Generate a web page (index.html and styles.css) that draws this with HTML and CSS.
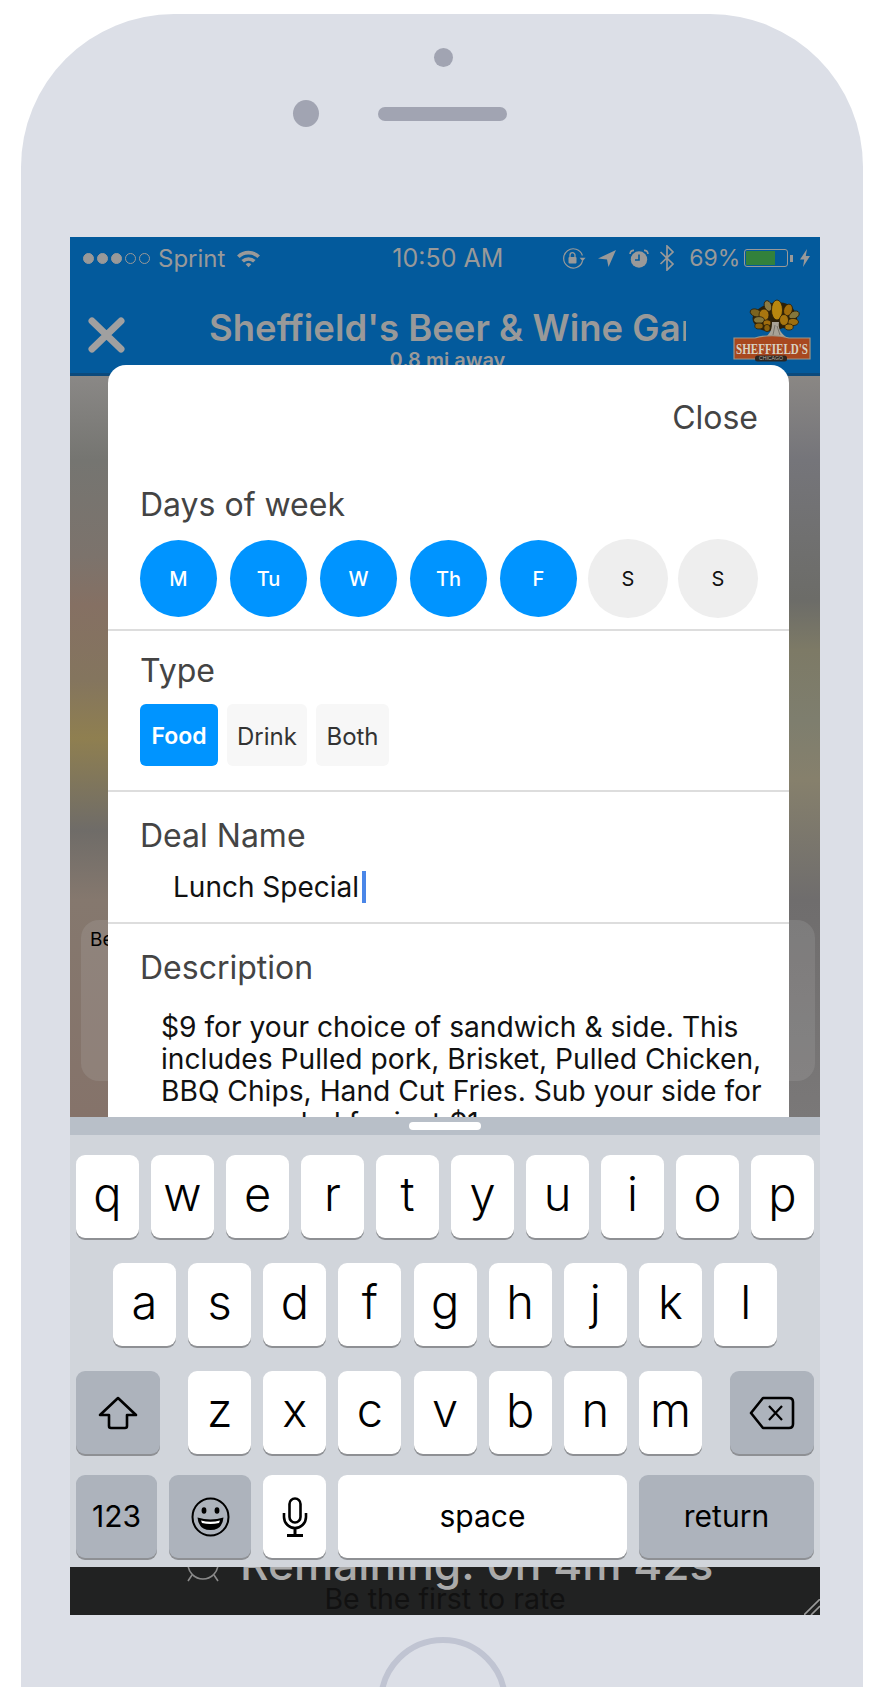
FILE: index.html
```html
<!DOCTYPE html>
<html>
<head>
<title>Add Deal</title>
<link rel="stylesheet" href="styles.css">
</head>
<body>

<div class="phone">
  <div class="phone-top">
    <div class="sensor"></div>
    <div class="sensor-row">
      <div class="camera"></div>
      <div class="speaker"></div>
    </div>
  </div>

  <div class="screen">
    <div class="header">
      <div class="status">
        <div class="signal">
          <i class="on"></i><i class="on"></i><i class="on"></i><i></i><i></i>
        </div>
        <span class="carrier">Sprint</span>
        <svg class="wifi" viewBox="0 0 24 18" width="25" height="19">
          <path d="M1 6 A16 16 0 0 1 23 6 L20.5 8.6 A12.5 12.5 0 0 0 3.5 8.6 Z" fill="#999"/>
          <path d="M5.2 10.4 A10 10 0 0 1 18.8 10.4 L16.4 12.8 A6.6 6.6 0 0 0 7.6 12.8 Z" fill="#999"/>
          <path d="M9.3 14.5 A4.2 4.2 0 0 1 14.7 14.5 L12 17.5 Z" fill="#999"/>
        </svg>
        <span class="clock">10:50 AM</span>
        <svg class="ico-lock" viewBox="0 0 24 21" width="24" height="21">
          <path d="M20.5 13 A9.6 9.6 0 1 1 20.4 7.5" fill="none" stroke="#999" stroke-width="1.2"/>
          <path d="M17.6 9.8 H23.6 L20.6 13.2 Z" fill="#999"/>
          <rect x="6.5" y="9" width="8" height="6.5" rx="1" fill="#999"/>
          <path d="M8 9 V7.2 A2.5 2.5 0 0 1 13 7.2 V9" fill="none" stroke="#999" stroke-width="1.3"/>
        </svg>
        <svg class="ico-loc" viewBox="0 0 18 17" width="18" height="17">
          <path d="M0 8.5 L18 0 L10.5 17 L9 9.5 Z" fill="#999"/>
        </svg>
        <svg class="ico-alarm" viewBox="0 0 20 19" width="20" height="19">
          <circle cx="10" cy="10.5" r="8.2" fill="#999"/>
          <path d="M10 5.5 V11 H6" fill="none" stroke="#035a9c" stroke-width="1.6"/>
          <path d="M1 5 A4 4 0 0 1 5 1.4 M19 5 A4 4 0 0 0 15 1.4" fill="none" stroke="#999" stroke-width="1.6"/>
        </svg>
        <svg class="ico-bt" viewBox="0 0 16 26" width="16" height="26">
          <path d="M1.5 7 L14 19 L8 25 V1 L14 7 L1.5 19" fill="none" stroke="#999" stroke-width="1.7"/>
        </svg>
        <span class="percent">69%</span>
        <div class="battery"><div class="battery-level"></div></div>
        <div class="battery-nub"></div>
        <svg class="ico-bolt" viewBox="0 0 10 18" width="10" height="18">
          <path d="M7 0 L0 10.5 H4.2 L3 18 L10 7 H5.8 Z" fill="#999"/>
        </svg>
      </div>

      <div class="nav">
        <svg class="nav-close" viewBox="0 0 37 36" width="37" height="36">
          <path d="M4 4 L33 32 M33 4 L4 32" stroke="#a0a0a0" stroke-width="7" stroke-linecap="round"/>
        </svg>
        <div class="nav-title">
          <div class="venue">Sheffield's Beer &amp; Wine Garden</div>
          <div class="distance">0.8 mi away</div>
        </div>
        <svg class="logo" viewBox="0 0 78 63" width="78" height="63">
          <path d="M22 14 C30 2 56 -2 62 13 C68 22 60 31 50 29 C42 33 28 34 24 27 C19 24 18 18 22 14 Z" fill="#2c2008"/>
          <path d="M33 38 C38 33 39 30 39 23 L46 23 C45 29 47 33 53 38 Z" fill="#a8a296"/>
          <path d="M42 26 L40 36 M44 27 L47 36" stroke="#6b675e" stroke-width="0.8"/>
          <g fill="#a8760f" stroke="#2c2008" stroke-width="0.8">
            <ellipse cx="23" cy="14" rx="6" ry="3.8" fill="#7c6420" transform="rotate(20 23 14)"/>
            <ellipse cx="35" cy="7" rx="3.6" ry="5.5" fill="#8a7a44" transform="rotate(-20 35 7)"/>
            <ellipse cx="61" cy="16" rx="5.5" ry="3.6" fill="#85773c" transform="rotate(-25 61 16)"/>
            <ellipse cx="55" cy="11" rx="4.2" ry="6" fill="#a06c0c" transform="rotate(20 55 11)"/>
            <ellipse cx="31" cy="16" rx="5" ry="6"/>
            <ellipse cx="44" cy="11" rx="5.5" ry="10" fill="#b8860f"/>
            <ellipse cx="60" cy="23" rx="5.5" ry="3.6" fill="#9c6e10"/>
            <ellipse cx="51" cy="21" rx="4.5" ry="5.5" fill="#a8760f"/>
            <ellipse cx="26" cy="21" rx="5.5" ry="3.4" fill="#85773c"/>
            <ellipse cx="26" cy="27" rx="4.2" ry="3" fill="#8a600c"/>
            <ellipse cx="34" cy="24" rx="4" ry="3.2" fill="#a06c0c"/>
            <ellipse cx="56" cy="28" rx="4.2" ry="3" fill="#a8760f"/>
            <ellipse cx="34" cy="29" rx="3.2" ry="3.6" fill="#8a600c"/>
          </g>
          <path d="M1 39 H22 C32 36 46 36 56 39 H77 V60 H1 Z" fill="#a8481f" stroke="#9c9688" stroke-width="1.2"/>
          <text class="logo-name" x="39" y="55" text-anchor="middle" textLength="72" lengthAdjust="spacingAndGlyphs">SHEFFIELD'S</text>
          <rect x="22" y="56.5" width="32" height="6" rx="2.5" fill="#2b2622"/>
          <text class="logo-city" x="38" y="61.3" text-anchor="middle" textLength="24" lengthAdjust="spacingAndGlyphs">CHICAGO</text>
        </svg>
      </div>
    </div>

    <div class="photo">
      <div class="rating-card">Be the first to rate this deal</div>

      <div class="modal">
        <div class="modal-close">Close</div>

        <div class="section section-days">
          <div class="label">Days of week</div>
          <div class="days">
            <div class="day active">M</div>
            <div class="day active">Tu</div>
            <div class="day active">W</div>
            <div class="day active">Th</div>
            <div class="day active">F</div>
            <div class="day">S</div>
            <div class="day">S</div>
          </div>
        </div>

        <div class="section section-type">
          <div class="label">Type</div>
          <div class="types">
            <div class="type active">Food</div>
            <div class="type type-drink">Drink</div>
            <div class="type type-both">Both</div>
          </div>
        </div>

        <div class="section section-name">
          <div class="label">Deal Name</div>
          <div class="name-input">Lunch Special<span class="caret"></span></div>
        </div>

        <div class="section section-desc">
          <div class="label">Description</div>
          <div class="desc-input">$9 for your choice of sandwich &amp; side. This includes Pulled pork, Brisket, Pulled Chicken, BBQ Chips, Hand Cut Fries. Sub your side for soup or salad for just $1.</div>
        </div>
      </div>
    </div>

    <div class="keyboard">
      <div class="kb-handle"><div class="kb-pill"></div></div>
      <div class="kb-rows">
        <div class="kb-row row-1">
          <div class="key">q</div><div class="key">w</div><div class="key">e</div><div class="key">r</div><div class="key">t</div><div class="key">y</div><div class="key">u</div><div class="key">i</div><div class="key">o</div><div class="key">p</div>
        </div>
        <div class="kb-row row-2">
          <div class="key">a</div><div class="key">s</div><div class="key">d</div><div class="key">f</div><div class="key">g</div><div class="key">h</div><div class="key">j</div><div class="key">k</div><div class="key">l</div>
        </div>
        <div class="kb-row row-3">
          <div class="key key-gray key-shift">
            <svg viewBox="0 0 40 34" width="40" height="34">
              <path d="M20 2 L38 19 H29 V30 Q29 32 27 32 H13 Q11 32 11 30 V19 H2 Z" fill="none" stroke="#000" stroke-width="2.6" stroke-linejoin="round"/>
            </svg>
          </div>
          <div class="key key-z">z</div><div class="key">x</div><div class="key">c</div><div class="key">v</div><div class="key">b</div><div class="key">n</div><div class="key">m</div>
          <div class="key key-gray key-del">
            <svg viewBox="0 0 46 34" width="46" height="34">
              <path d="M14 2 H40 Q44 2 44 6 V28 Q44 32 40 32 H14 L2 17 Z" fill="none" stroke="#000" stroke-width="2.6" stroke-linejoin="round"/>
              <path d="M20 10 L33 24 M33 10 L20 24" stroke="#000" stroke-width="2.2"/>
            </svg>
          </div>
        </div>
        <div class="kb-row row-4">
          <div class="key key-gray key-small key-123">123</div>
          <div class="key key-gray key-emoji">
            <svg viewBox="0 0 39 40" width="39" height="40">
              <ellipse cx="19.5" cy="20" rx="18" ry="18.6" fill="none" stroke="#000" stroke-width="2"/>
              <ellipse cx="13" cy="13.5" rx="2.4" ry="3.2"/>
              <ellipse cx="26" cy="13.5" rx="2.4" ry="3.2"/>
              <path d="M6.5 20.5 Q19.5 24.5 32.5 20.5 Q31.5 33 19.5 33 Q7.5 33 6.5 20.5 Z"/>
              <path d="M10 23.5 Q19.5 26 29 23.5 L28 26 Q19.5 28 11 26 Z" fill="#fff"/>
            </svg>
          </div>
          <div class="key key-mic">
            <svg viewBox="0 0 26 40" width="26" height="40">
              <rect x="7.5" y="1.5" width="11" height="24" rx="5.5" fill="none" stroke="#000" stroke-width="2.6"/>
              <path d="M2 16 V20 A11 11 0 0 0 24 20 V16" fill="none" stroke="#000" stroke-width="2.6"/>
              <path d="M13 31 V38 M5 38.5 H21" stroke="#000" stroke-width="3"/>
            </svg>
          </div>
          <div class="key key-small key-space">space</div>
          <div class="key key-gray key-small key-return">return</div>
        </div>
      </div>
    </div>

    <div class="timer-bar">
      <div class="timer-line">
        <svg class="timer-icon" viewBox="0 0 34 34" width="34" height="34">
          <circle cx="17" cy="15" r="15" fill="none" stroke="#8a8a8a" stroke-width="1.6"/>
          <path d="M6 26 L2 32 M28 26 L32 32" stroke="#8a8a8a" stroke-width="1.6"/>
        </svg>
        <span class="timer-text">Remaining: 0h 4m 42s</span>
      </div>
      <div class="timer-sub">Be the first to rate</div>
      <svg class="grip" viewBox="0 0 16 16" width="16" height="16">
        <path d="M0 16 L16 0 M7 16 L16 7" stroke="#9a9a9a" stroke-width="1.6"/>
      </svg>
    </div>
  </div>

  <div class="home-button"></div>
</div>

</body>
</html>
```
FILE: styles.css
```css
* {
  box-sizing: border-box;
}

body, html {
  margin: 0;
  height: 1687px;
  overflow: hidden;
  background-color: #fff;
  font-family: Inter, "Liberation Sans", sans-serif;
}

.phone {
  margin: 14px 0 0 21px;
  width: 842px;
  height: 1673px;
  background-color: #dcdfe7;
  border-radius: 153px 153px 0 0;
  overflow: hidden;
}

.phone-top {
  height: 223px;
  padding-top: 34px;
}
.sensor {
  width: 19px;
  height: 19px;
  margin-left: 413px;
  border-radius: 50%;
  background-color: #a1a4b2;
}
.sensor-row {
  display: flex;
  align-items: center;
  margin: 33px 0 0 272px;
}
.camera {
  width: 26px;
  height: 27px;
  border-radius: 50%;
  background-color: #a1a4b2;
}
.speaker {
  width: 129px;
  height: 14px;
  margin-left: 59px;
  border-radius: 7px;
  background-color: #a1a4b2;
}

.screen {
  position: relative;
  width: 750px;
  height: 1378px;
  margin-left: 49px;
  overflow: hidden;
}

/* header */
.header {
  height: 139px;
  background-color: #035a9c;
  border-bottom: 3px solid #0c4a7c;
  color: #999;
}
.status {
  display: flex;
  align-items: center;
  height: 42px;
  padding-left: 13px;
  font-size: 24px;
}
.signal {
  display: flex;
  gap: 3px;
  width: 75px;
}
.signal i {
  width: 11px;
  height: 11px;
  border: 1px solid #999;
  border-radius: 50%;
}
.signal i.on {
  background-color: #999;
}
.wifi { margin-left: 11px; }
.clock {
  margin-left: 131px;
  font-size: 25px;
}
.ico-lock { margin-left: 59px; }
.ico-loc { margin-left: 12px; }
.ico-alarm { margin-left: 13px; }
.ico-bt { margin-left: 10px; }
.percent {
  margin-left: 14px;
  font-size: 23px;
}
.battery {
  width: 44px;
  height: 18px;
  margin-left: 4px;
  padding: 1px;
  border: 1px solid #999;
  border-radius: 3px;
}
.battery-level {
  width: 29px;
  height: 100%;
  background-color: #32813c;
}
.battery-nub {
  width: 3px;
  height: 7px;
  margin-left: 2px;
  background-color: #999;
}
.ico-bolt { margin-left: 7px; }

.nav {
  display: flex;
  align-items: flex-start;
  padding-left: 18px;
}
.nav-close {
  margin-top: 38px;
  flex: none;
}
.nav-title {
  width: 477px;
  margin: 28px 0 0 84px;
  overflow: hidden;
  text-align: center;
  flex: none;
}
.venue {
  font-size: 36.5px;
  font-weight: 600;
  line-height: 42px;
  white-space: nowrap;
  text-align: left;
}
.distance {
  font-size: 20px;
  font-weight: 600;
  line-height: 22px;
}
.logo {
  margin: 20px 0 0 47px;
  flex: none;
}
.logo-name {
  font-family: "Liberation Serif", serif;
  font-size: 15px;
  font-weight: bold;
  fill: #d8d2c4;
}
.logo-city {
  font-family: "Liberation Sans", sans-serif;
  font-size: 5px;
  fill: #b8b0a0;
}

/* blurred photo behind the modal */
.photo {
  position: relative;
  height: 741px;
  padding: 544px 0 0 11px;
  background-image:
    linear-gradient(#8a8886 0, #757571 84px, #7c736c 180px, #857063 229px, #84755e 304px, #8f7f50 362px, #6f6c68 454px, #85786e 524px, #85736a 741px),
    linear-gradient(#8a8784 0, #75757a 84px, #6c6c68 224px, #7d7a66 274px, #7e7e6e 344px, #86806c 404px, #6f6d6d 524px, #7a7878 741px);
  background-size: 50% 100%;
  background-position: left top, right top;
  background-repeat: no-repeat;
}
.rating-card {
  width: 734px;
  height: 161px;
  padding: 8px 9px;
  border-radius: 18px;
  background-color: rgba(190, 190, 190, 0.18);
  color: #000;
  font-size: 19px;
  line-height: 24px;
  white-space: nowrap;
  overflow: hidden;
}

.modal {
  position: absolute;
  top: -11px;
  left: 38px;
  bottom: 0;
  width: 681px;
  padding-top: 33px;
  background-color: #fff;
  border-radius: 18px 18px 0 0;
  overflow: hidden;
}
.modal-close {
  padding-right: 31px;
  color: #444;
  font-size: 32px;
  line-height: 40px;
  text-align: right;
}
.label {
  color: #444;
  font-size: 32px;
  line-height: 40px;
}
.section {
  padding-left: 32px;
  border-bottom: 2px solid #ddd;
}
.section-days {
  margin-top: 47px;
  padding-bottom: 11px;
}
.section-type {
  padding-top: 20px;
  padding-bottom: 24px;
}
.section-name {
  padding-top: 24px;
  padding-bottom: 15px;
}
.section-desc {
  padding-top: 24px;
  border-bottom: 0;
}

.days {
  display: flex;
  align-items: center;
  margin-top: 14px;
}
.day {
  display: flex;
  align-items: center;
  justify-content: center;
  width: 80px;
  height: 79px;
  margin-left: -2px;
  margin-right: 12px;
  border-radius: 50%;
  background-color: #eee;
  color: #111;
  font-size: 20px;
}
.day.active {
  width: 77px;
  height: 77px;
  margin-left: 0;
  margin-right: 13px;
  background-color: #0094ff;
  color: #fff;
  font-weight: 500;
}

.types {
  display: flex;
  gap: 9px;
  margin-top: 13px;
}
.type {
  display: flex;
  align-items: center;
  justify-content: center;
  width: 80px;
  height: 62px;
  padding-top: 2px;
  border-radius: 6px;
  background-color: #f7f7f7;
  color: #333;
  font-size: 24px;
}
.type.active {
  width: 78px;
  background-color: #0094ff;
  color: #fff;
  font-size: 23px;
  font-weight: 600;
}
.type-both {
  width: 73px;
}

.name-input {
  display: flex;
  align-items: center;
  margin-top: 11px;
  padding-left: 33px;
  color: #111;
  font-size: 28px;
  line-height: 40px;
}
.caret {
  width: 4px;
  height: 32px;
  margin-left: 3px;
  background-color: #4a86e8;
}
.desc-input {
  width: 640px;
  margin-top: 23px;
  padding-left: 21px;
  color: #111;
  font-size: 28.2px;
  line-height: 32px;
}

/* keyboard */
.keyboard {
  position: relative;
  height: 450px;
  background-color: #d1d5db;
}
.kb-handle {
  display: flex;
  justify-content: center;
  height: 18px;
  padding-top: 5px;
  background-color: #b8bfc8;
}
.kb-pill {
  width: 72px;
  height: 8px;
  border-radius: 4px;
  background-color: #fff;
}
.kb-rows {
  padding-top: 20px;
}
.kb-row {
  display: flex;
  gap: 12px;
  padding-left: 6px;
  margin-bottom: 25px;
}
.row-2 {
  gap: 12.15px;
  padding-left: 43px;
}
.row-3 {
  gap: 12.15px;
  margin-bottom: 21px;
}
.key {
  display: flex;
  align-items: center;
  justify-content: center;
  width: 63px;
  height: 83px;
  padding-bottom: 7px;
  border-radius: 9px;
  background-color: #fff;
  box-shadow: 0 2px 0 #8e9094;
  color: #000;
  font-size: 47px;
  font-weight: 300;
}
.key-gray {
  background-color: #adb3bc;
}
.key-small {
  padding-bottom: 2px;
  font-size: 30px;
  font-weight: 400;
}
.key-shift, .key-del, .key-emoji, .key-mic {
  padding-bottom: 0;
}
.key-shift { width: 84px; }
.key-z { margin-left: 16px; }
.key-del {
  width: 84px;
  margin-left: 16px;
}
.key-123 { width: 81px; }
.key-emoji { width: 82px; }
.key-space { width: 289px; }
.key-return { width: 175px; }

/* strip under the keyboard */
.timer-bar {
  position: relative;
  height: 48px;
  background-color: #212222;
  overflow: hidden;
}
.timer-line {
  display: flex;
  align-items: flex-start;
  height: 20px;
  padding-left: 116px;
}
.timer-icon {
  flex: none;
  margin-top: -18px;
}
.timer-text {
  margin: -13px 0 0 20px;
  color: #aaa;
  font-size: 44.2px;
  font-weight: 500;
  line-height: 20px;
  white-space: nowrap;
}
.timer-sub {
  color: #111;
  font-size: 28.5px;
  line-height: 24px;
  text-align: center;
}
.grip {
  position: absolute;
  right: 0;
  bottom: 0;
}

.home-button {
  width: 130px;
  height: 130px;
  margin: 22px 0 0 357px;
  border: 6px solid #c0c4d2;
  border-radius: 50%;
}
```
